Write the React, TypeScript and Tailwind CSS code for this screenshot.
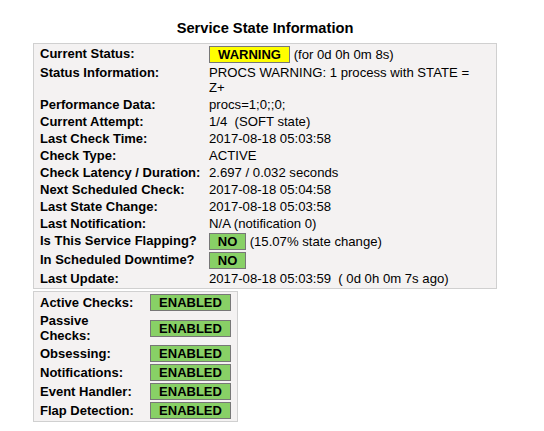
import React from "react";

interface InfoRow {
    label: string;
    value: React.ReactNode;
}

const Badge = ({ text, color, width }: { text: string; color: string; width: string }) => (
    <span className={`inline-block border border-[#777777] font-bold text-[13px] text-center leading-[15px] ${color} ${width}`}>{text}</span>
);

const stateRows: InfoRow[] = [
    {
        label: "Current Status:",
        value: (
            <>
                <Badge text="WARNING" color="bg-[#ffff00]" width="w-[81px]" />
                <span> (for 0d 0h 0m 8s)</span>
            </>
        ),
    },
    {
        label: "Status Information:",
        value: (
            <>
                PROCS WARNING: 1 process with STATE =
                <br />
                Z+
            </>
        ),
    },
    { label: "Performance Data:", value: "procs=1;0;;0;" },
    { label: "Current Attempt:", value: "1/4\u00a0\u00a0(SOFT state)" },
    { label: "Last Check Time:", value: "2017-08-18 05:03:58" },
    { label: "Check Type:", value: "ACTIVE" },
    { label: "Check Latency / Duration:", value: "2.697\u00a0/\u00a00.032 seconds" },
    { label: "Next Scheduled Check:", value: "2017-08-18 05:04:58" },
    { label: "Last State Change:", value: "2017-08-18 05:03:58" },
    { label: "Last Notification:", value: "N/A (notification 0)" },
    {
        label: "Is This Service Flapping?",
        value: (
            <>
                <Badge text="NO" color="bg-[#88d066]" width="w-[37px]" />
                <span> (15.07% state change)</span>
            </>
        ),
    },
    { label: "In Scheduled Downtime?", value: <Badge text="NO" color="bg-[#88d066]" width="w-[37px]" /> },
    { label: "Last Update:", value: "2017-08-18 05:03:59\u00a0\u00a0( 0d 0h 0m 7s ago)" },
];

const checkRows = ["Active Checks:", "Passive Checks:", "Obsessing:", "Notifications:", "Event Handler:", "Flap Detection:"];

export default function App() {
    return (
        <div className="min-h-[431px] w-[544px] bg-white text-black font-['Liberation_Sans',Arial,sans-serif] text-[13px] leading-[15px]">
            <div className="ml-[33px] w-[464px] pt-[20px]">
                <div className="text-center font-bold text-[14.67px] leading-[17px] mb-[6px]">Service State Information</div>

                {/* state info */}
                <div className="border border-[#d0d0d0] bg-[#f4f2f2] py-px">
                    <table className="w-full table-fixed border-collapse">
                        <colgroup>
                            <col className="w-[175px]" />
                            <col />
                        </colgroup>
                        <tbody>
                            {stateRows.map((row, i) => (
                                <tr key={i}>
                                    <td className="pl-[6px] py-px align-top font-bold whitespace-nowrap">{row.label}</td>
                                    <td className="py-px pr-[6px] align-top text-[13.15px]">{row.value}</td>
                                </tr>
                            ))}
                        </tbody>
                    </table>
                </div>

                {/* checks */}
                <div className="mt-[2px] w-[205px] border border-[#d0d0d0] bg-[#f4f2f2] py-px">
                    <table className="w-full table-fixed border-collapse">
                        <colgroup>
                            <col className="w-[116px]" />
                            <col />
                        </colgroup>
                        <tbody>
                            {checkRows.map((label, i) => (
                                <tr key={i}>
                                    <td className="pl-[6px] pr-[14px] py-px align-middle font-bold">{label}</td>
                                    <td className="py-px align-middle">
                                        <Badge text="ENABLED" color="bg-[#88d066]" width="w-[81px]" />
                                    </td>
                                </tr>
                            ))}
                        </tbody>
                    </table>
                </div>
            </div>
        </div>
    );
}
